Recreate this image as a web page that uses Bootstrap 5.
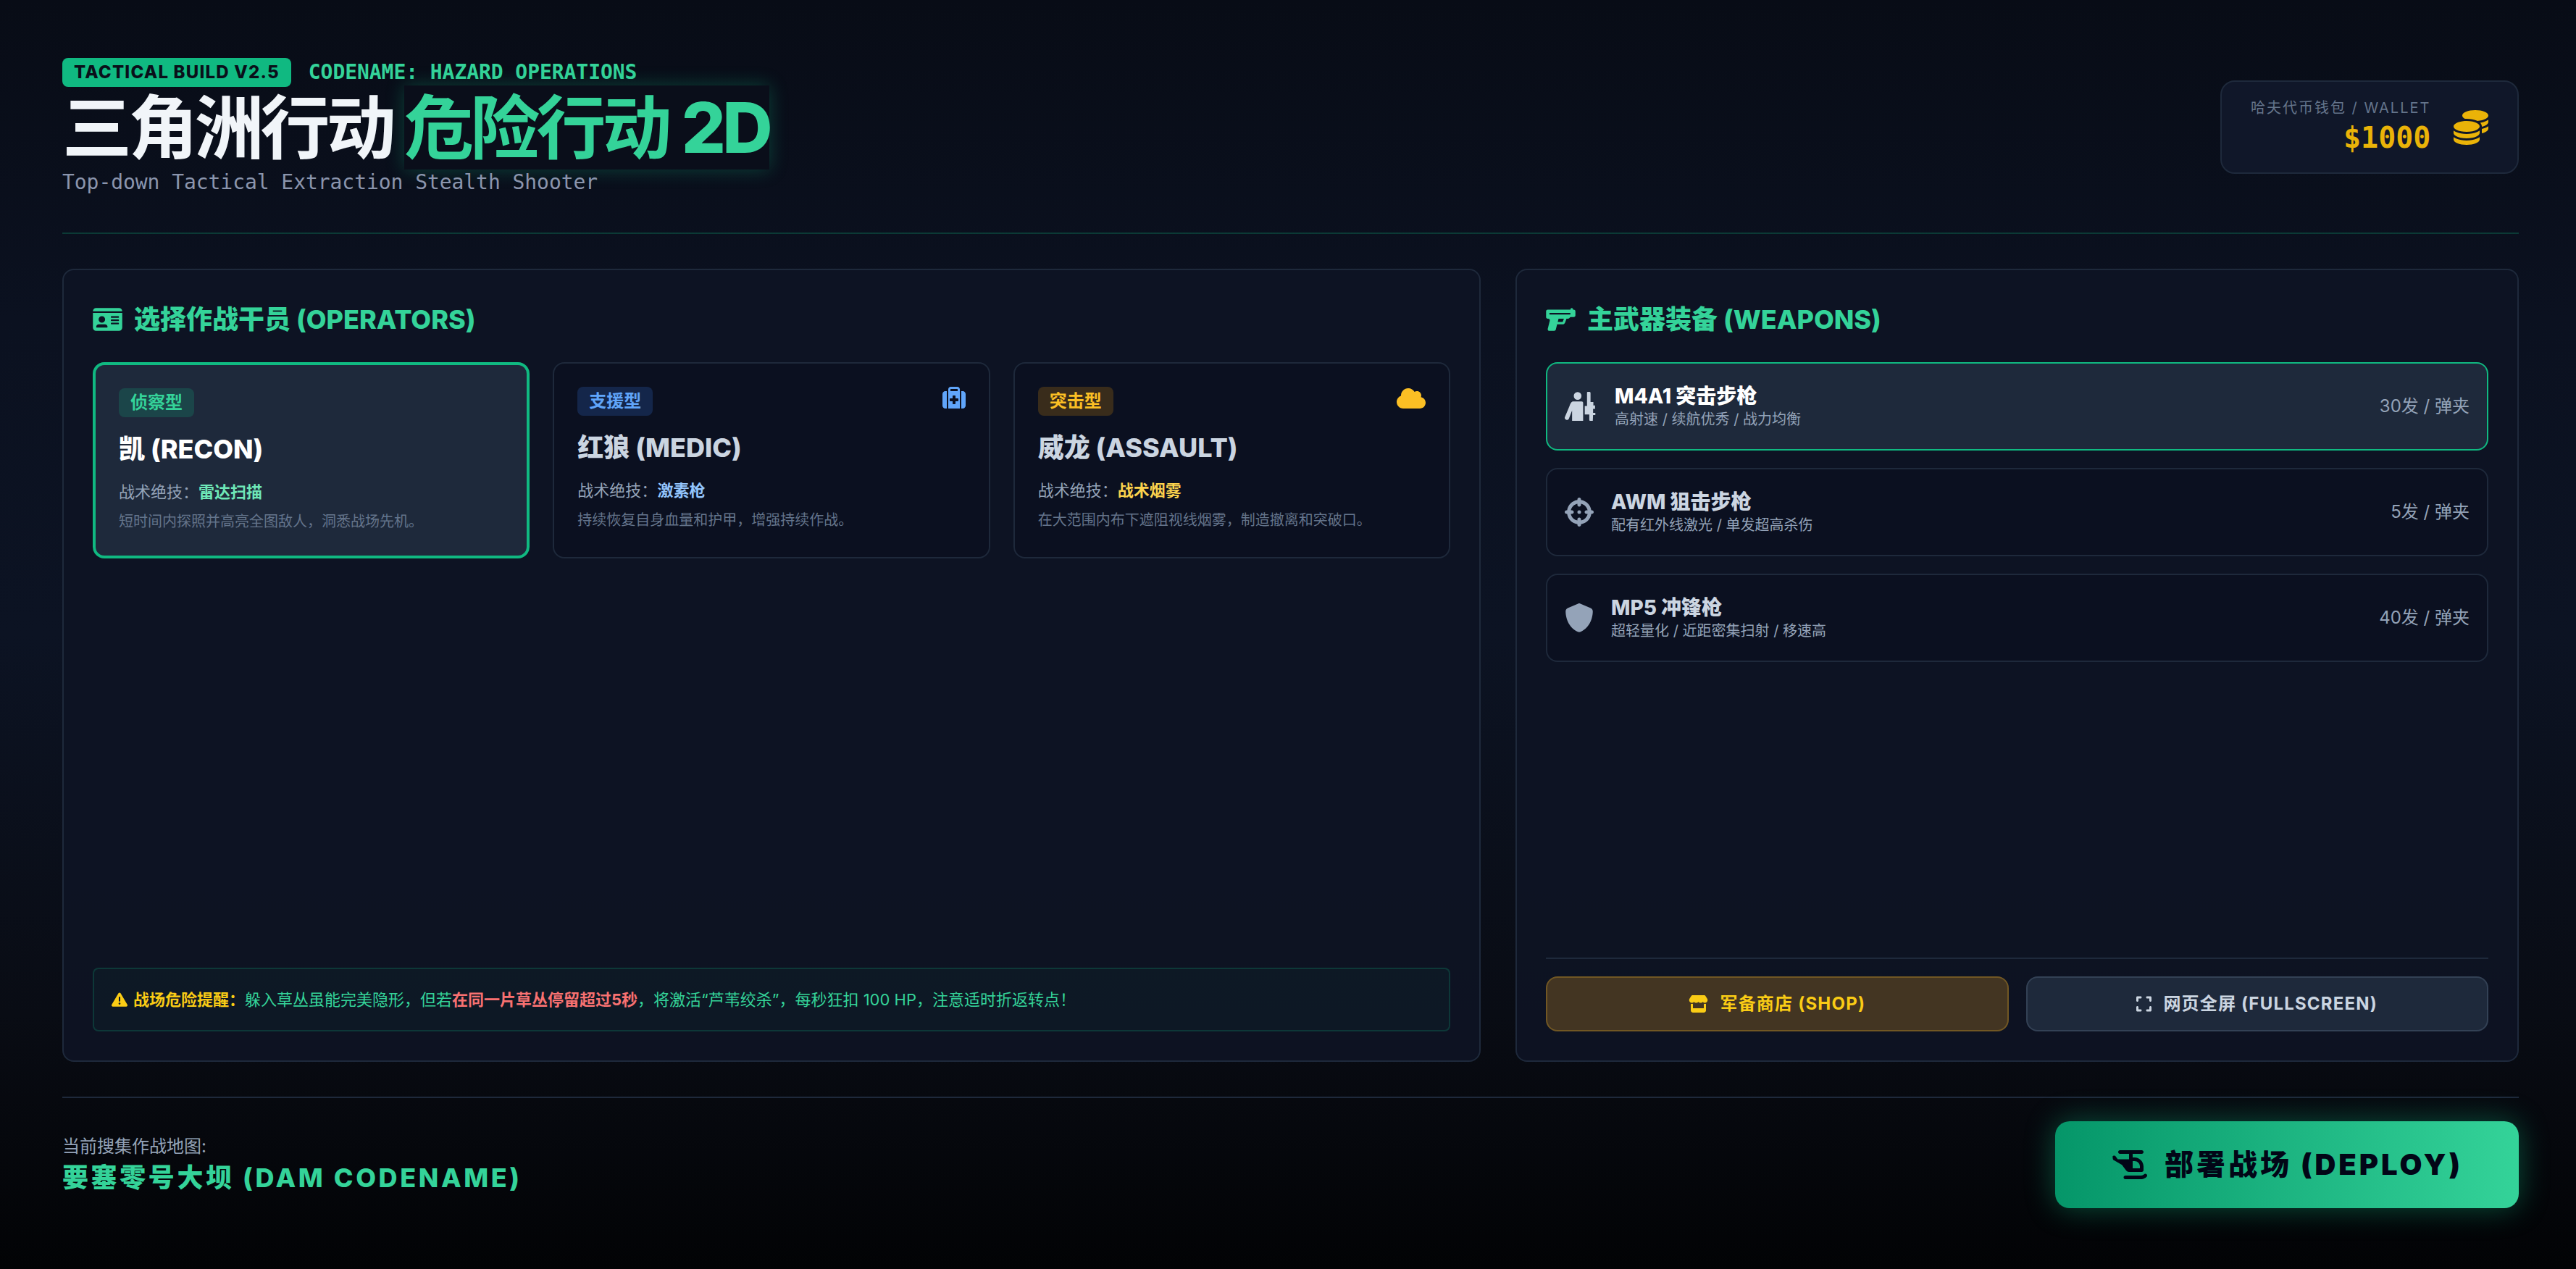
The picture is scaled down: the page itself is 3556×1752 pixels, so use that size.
<!DOCTYPE html>
<html lang="zh-CN">
<head>
<meta charset="utf-8">
<title>三角洲行动 危险行动 2D</title>
<link href="https://cdn.jsdelivr.net/npm/bootstrap@5.3.0/dist/css/bootstrap.min.css" rel="stylesheet">
<style>
:root{--inter:Inter,"Noto Sans CJK SC",sans-serif;--mono:"DejaVu Sans Mono","Noto Sans CJK SC",monospace;--em:#10b981;--em2:#34d399;--line:#1e293b}
html,body{height:100%}
body{font-family:var(--inter);background:linear-gradient(180deg,#080c16 0%,#0b1120 25%,#0c1323 50%,#090c14 80%,#020305 100%);color:#e2e8f0;overflow:hidden}
.shell{height:1752px;padding:80px 79px 84px 86px}
.build-tag{background:var(--em);color:#0a0f1a;font-size:24px;font-weight:800;letter-spacing:1.2px;height:40px;padding:0 16px;border-radius:8px;line-height:40px}
.codename{font-family:var(--mono);font-size:28px;font-weight:700;letter-spacing:-.06px;color:var(--em2);line-height:40px}
.hero{font-size:96px;font-weight:700;letter-spacing:-4.8px;line-height:96px;color:#f1f5f9;margin:8px 0 0}
.hero-accent{color:var(--em2);background:#0a0e1a;margin-left:16px;box-shadow:0 0 24px rgba(16,185,129,.3)}
.hero-latin{font-weight:800}
.tagline{font-family:var(--mono);font-size:28px;letter-spacing:-.06px;line-height:42px;color:#8b95ad;margin:7px 0 0}
.wallet{width:412px;height:129px;margin-bottom:2px;background:#101729;border:2px solid var(--line);border-radius:20px;padding:0 40px}
.wallet-label{font-size:20px;letter-spacing:2px;color:#64748b;line-height:24px;white-space:nowrap}
.wallet-amt{font-family:var(--mono);font-size:40px;font-weight:700;color:#eab308;line-height:48px;text-align:right;margin-top:5px}
.rule{height:2px;background:rgba(16,185,129,.25);margin:48px 0}
.rule-dim{height:2px;background:var(--line)}
.panel{background:rgba(14,19,36,.92);border:2px solid var(--line);border-radius:16px;padding:40px;height:100%}
.panel-title{font-size:36px;font-weight:800;line-height:44px;color:var(--em2);margin:6px 0 37px}
.op-grid{display:grid;grid-template-columns:repeat(3,1fr);gap:32px}
.op-card{position:relative;background:#0b1020;border:2px solid var(--line);border-radius:16px;padding:32px;height:271px}
.op-card.sel{background:var(--line);border:4px solid var(--em)}
.op-tag{display:inline-block;font-size:24px;font-weight:700;height:40px;line-height:40px;padding:0 16px;border-radius:8px}
.tag-g{background:rgba(16,185,129,.2);color:var(--em2)}
.tag-b{background:rgba(59,130,246,.2);color:#60a5fa}
.tag-y{background:rgba(245,158,11,.2);color:#fbbf24}
.op-name{font-size:36px;font-weight:800;line-height:44px;color:#cbd5e1;margin:22px 0 0}
.sel .op-name{color:#fff}
.op-skill{font-size:22px;line-height:30px;color:#94a3b8;margin:22px 0 0}
.op-skill b{font-weight:700}
.op-desc{font-size:20px;line-height:28px;color:#64748b;margin:12px 0 0}
.op-ico{position:absolute;top:32px;right:32px;height:32px}
.alert-box{height:88px;background:rgba(16,185,129,.04);border:2px solid rgba(16,185,129,.2);border-radius:8px;padding:0 24px;font-size:22px;color:#34d399}
.alert-box b{font-weight:700}
.weap{height:122px;background:#0b1020;border:2px solid var(--line);border-radius:16px;padding:0 24px}
.weap.sel{background:var(--line);border-color:var(--em)}
.weap-ico{height:40px;color:#94a3b8;flex:none}
.sel .weap-ico{color:#cbd5e1}
.weap-name{font-size:28px;font-weight:800;line-height:36px;color:#cbd5e1}
.sel .weap-name{color:#fff}
.weap-sub{font-size:20px;line-height:28px;color:#94a3b8}
.weap-ammo{font-size:24px;color:#94a3b8}
.act-btn{height:76px;flex:1 1 0;font-size:24px;font-weight:700;letter-spacing:1.2px;border-radius:16px;border-width:2px;border-style:solid}
.btn-shop{background:#433522;border-color:#715724;color:#facc15}
.btn-full{background:var(--line);border-color:#334155;color:#cbd5e1}
.map-label{font-size:24px;line-height:36px;color:#94a3b8}
.map-name{font-size:36px;font-weight:800;letter-spacing:3.6px;line-height:50px;color:var(--em2)}
.deploy{height:120px;width:640px;border:0;border-radius:20px;background:linear-gradient(90deg,#059669,#34d399);box-shadow:0 0 40px rgba(16,185,129,.4);color:#020617;font-size:40px;font-weight:900;letter-spacing:4px}
svg{fill:currentColor;display:block}
</style>
</head>
<body>
<div class="shell d-flex flex-column">
  <header class="d-flex justify-content-between align-items-center">
    <div>
      <div class="d-flex align-items-center gap-4">
        <span class="build-tag">TACTICAL BUILD V2.5</span>
        <span class="codename">CODENAME: HAZARD OPERATIONS</span>
      </div>
      <h1 class="hero">三角洲行动<span class="hero-accent">危险行动 <span class="hero-latin">2D</span></span></h1>
      <p class="tagline">Top-down Tactical Extraction Stealth Shooter</p>
    </div>
    <div class="wallet d-flex align-items-center justify-content-between">
      <div>
        <div class="wallet-label">哈夫代币钱包 / WALLET</div>
        <div class="wallet-amt">$1000</div>
      </div>
      <svg viewBox="0 0 512 512" width="48" height="48" style="color:#eab308"><path d="M512 80c0 18-14.3 34.6-38.4 48c-29.1 16.1-72.5 27.5-122.3 30.9c-3.7-1.8-7.4-3.5-11.3-5C300.6 137.4 248.2 128 192 128c-8.3 0-16.4 .2-24.5 .6l-1.1-.6C142.3 114.6 128 98 128 80c0-44.2 86-80 192-80S512 35.8 512 80zM160.7 161.1c10.2-.7 20.7-1.1 31.3-1.1c62.2 0 117.4 12.3 152.5 31.4C369.3 204.9 384 221.7 384 240c0 4-.7 7.9-2.1 11.7c-4.6 13.2-17 25.3-35 35.5c0 0 0 0 0 0c-.1 .1-.3 .1-.4 .2l0 0 0 0c-.3 .2-.6 .3-.9 .5c-35 19.4-90.8 32-153.6 32c-59.6 0-112.9-11.3-148.2-29.1c-1.9-.9-3.7-1.9-5.5-2.9C14.3 274.6 0 258 0 240c0-34.8 53.4-64.5 128-75.4c10.5-1.5 21.4-2.7 32.7-3.5zM416 240c0-21.9-10.6-39.9-24.1-53.4c28.3-4.4 54.2-11.4 76.2-20.5c16.3-6.8 31.5-15.2 43.9-25.5V176c0 19.3-16.5 37.1-43.8 50.9c-14.6 7.4-32.4 13.7-52.4 18.5c.1-1.8 .2-3.5 .2-5.3zm-32 96c0 18-14.3 34.6-38.4 48c-1.8 1-3.6 1.9-5.5 2.9C304.9 404.7 251.6 416 192 416c-62.8 0-118.6-12.6-153.6-32C14.3 370.6 0 354 0 336V300.6c12.5 10.3 27.6 18.7 43.9 25.5C83.4 342.6 135.8 352 192 352s108.6-9.4 148.1-25.9c7.8-3.2 15.3-6.9 22.4-10.9c6.1-3.4 11.8-7.2 17.2-11.2c1.5-1.1 2.9-2.3 4.3-3.4V304v5.7V336zm32 0V304 278.1c19-4.2 36.5-9.5 52.1-16c16.3-6.8 31.5-15.2 43.9-25.5V272c0 10.5-5 21-14.9 30.9c-16.3 16.3-45 29.7-81.3 38.4c.1-1.7 .2-3.5 .2-5.3zM192 448c56.2 0 108.6-9.4 148.1-25.9c16.3-6.8 31.5-15.2 43.9-25.5V432c0 44.2-86 80-192 80S0 476.2 0 432V396.6c12.5 10.3 27.6 18.7 43.9 25.5C83.4 438.6 135.8 448 192 448z"/></svg>
    </div>
  </header>
  <div class="rule"></div>
  <main class="row gx-5 flex-grow-1" style="min-height:0">
    <div class="col-7 h-100">
      <section class="panel d-flex flex-column">
        <h2 class="panel-title d-flex align-items-center gap-3">
          <svg viewBox="0 0 576 512" width="41" height="36"><path d="M0 96l576 0c0-35.3-28.7-64-64-64H64C28.7 32 0 60.7 0 96zm0 32V416c0 35.3 28.7 64 64 64H512c35.3 0 64-28.7 64-64V128H0zM64 405.3c0-29.5 23.9-53.3 53.3-53.3H234.7c29.5 0 53.3 23.9 53.3 53.3c0 5.9-4.8 10.7-10.7 10.7H74.7c-5.9 0-10.7-4.8-10.7-10.7zM176 192a64 64 0 1 1 0 128 64 64 0 1 1 0-128zm176 16c0-8.8 7.2-16 16-16H496c8.8 0 16 7.2 16 16s-7.2 16-16 16H368c-8.8 0-16-7.2-16-16zm0 64c0-8.8 7.2-16 16-16H496c8.8 0 16 7.2 16 16s-7.2 16-16 16H368c-8.8 0-16-7.2-16-16zm0 64c0-8.8 7.2-16 16-16H496c8.8 0 16 7.2 16 16s-7.2 16-16 16H368c-8.8 0-16-7.2-16-16z"/></svg>
          选择作战干员 (OPERATORS)
        </h2>
        <div class="op-grid">
          <article class="op-card sel">
            <span class="op-tag tag-g">侦察型</span>
            <div class="op-name">凯 (RECON)</div>
            <div class="op-skill">战术绝技&#xFF1A;<b style="color:#6ee7b7">雷达扫描</b></div>
            <div class="op-desc">短时间内探照并高亮全图敌人&#xFF0C;洞悉战场先机。</div>
          </article>
          <article class="op-card">
            <span class="op-tag tag-b">支援型</span>
            <svg class="op-ico" viewBox="0 0 512 512" width="32" height="32" style="color:#60a5fa"><path d="M184 48H328c4.4 0 8 3.6 8 8V96H176V56c0-4.4 3.6-8 8-8zm-56 8V96v32V480H384V128 96 56c0-30.9-25.1-56-56-56H184c-30.9 0-56 25.1-56 56zM96 96H64C28.7 96 0 124.7 0 160V416c0 35.3 28.7 64 64 64H96V96zM416 480h32c35.3 0 64-28.7 64-64V160c0-35.3-28.7-64-64-64H416V480zM224 208c0-8.8 7.2-16 16-16h32c8.8 0 16 7.2 16 16v48h48c8.8 0 16 7.2 16 16v32c0 8.8-7.2 16-16 16H288v48c0 8.8-7.2 16-16 16H240c-8.8 0-16-7.2-16-16V320H176c-8.8 0-16-7.2-16-16V272c0-8.8 7.2-16 16-16h48V208z"/></svg>
            <div class="op-name">红狼 (MEDIC)</div>
            <div class="op-skill">战术绝技&#xFF1A;<b style="color:#93c5fd">激素枪</b></div>
            <div class="op-desc">持续恢复自身血量和护甲&#xFF0C;增强持续作战。</div>
          </article>
          <article class="op-card">
            <span class="op-tag tag-y">突击型</span>
            <svg class="op-ico" viewBox="0 0 640 512" width="40" height="32" style="color:#fbbf24"><path d="M0 336c0 79.5 64.5 144 144 144H512c70.7 0 128-57.3 128-128c0-61.9-44-113.6-102.4-125.4c4.1-10.7 6.4-22.4 6.4-34.6c0-53-43-96-96-96c-19.7 0-38.1 6-53.3 16.2C367 64.2 315.3 32 256 32C167.6 32 96 103.6 96 192c0 2.7 .1 5.4 .2 8.1C40.2 219.8 0 273.2 0 336z"/></svg>
            <div class="op-name">威龙 (ASSAULT)</div>
            <div class="op-skill">战术绝技&#xFF1A;<b style="color:#fcd34d">战术烟雾</b></div>
            <div class="op-desc">在大范围内布下遮阻视线烟雾&#xFF0C;制造撤离和突破口。</div>
          </article>
        </div>
        <div class="alert-box mt-auto d-flex align-items-center gap-2">
          <svg viewBox="0 0 512 512" width="22" height="22" style="color:#facc15"><path d="M256 32c14.2 0 27.3 7.5 34.5 19.8l216 368c7.3 12.4 7.3 27.7 .2 40.1S486.3 480 472 480H40c-14.3 0-27.6-7.7-34.7-20.1s-7-27.8 .2-40.1l216-368C228.7 39.5 241.8 32 256 32zm0 128c-13.3 0-24 10.7-24 24V296c0 13.3 10.7 24 24 24s24-10.7 24-24V184c0-13.3-10.7-24-24-24zm32 224a32 32 0 1 0 -64 0 32 32 0 1 0 64 0z"/></svg>
          <span><b style="color:#facc15">战场危险提醒&#xFF1A;</b>躲入草丛虽能完美隐形&#xFF0C;但若<b style="color:#f87171">在同一片草丛停留超过5秒</b>&#xFF0C;将激活“芦苇绞杀”&#xFF0C;每秒狂扣 100 HP&#xFF0C;注意适时折返转点&#xFF01;</span>
        </div>
      </section>
    </div>
    <div class="col-5 h-100">
      <section class="panel d-flex flex-column">
        <h2 class="panel-title d-flex align-items-center gap-3">
          <svg viewBox="0 0 576 512" width="41" height="36"><path d="M528 56c0-13.3-10.7-24-24-24s-24 10.7-24 24v8H32C14.3 64 0 78.3 0 96V208c0 17.7 14.3 32 32 32H42c20.8 0 36.1 19.6 31 39.8L33 440.2c-2.4 9.6-.2 19.7 5.8 27.5S54.1 480 64 480h96c14.7 0 27.5-10 31-24.2L217 352H321.4c23.7 0 44.8-14.9 52.7-37.2L400.9 240H432c8.5 0 16.6-3.4 22.6-9.4L477.3 208H544c17.7 0 32-14.3 32-32V96c0-17.7-14.3-32-32-32H528V56zM321.4 304H229l16-64h105l-21 58.7c-1.1 3.2-4.2 5.3-7.5 5.3zM80 128H464c8.8 0 16 7.2 16 16s-7.2 16-16 16H80c-8.8 0-16-7.2-16-16s7.2-16 16-16z"/></svg>
          主武器装备 (WEAPONS)
        </h2>
        <div class="d-flex flex-column gap-4">
          <div class="weap sel d-flex align-items-center justify-content-between">
            <div class="d-flex align-items-center gap-4">
              <svg class="weap-ico" viewBox="0 0 576 512" width="45" height="40"><circle cx="228" cy="72" r="68"/><path d="M150 170H300c15 0 25 10 25 25V512H130V330L75 470c-8 22-30 32-50 24s-30-30-22-50L85 250c15-45 35-80 65-80z"/><path d="M394 10c0-6 6-10 12-10h30c10 0 20 8 20 18V180h50v60h30v60h-35v70h40v40h-40l-5 102h-40c-14 0-22-8-22-20V400H354V250h40z"/></svg>
              <div><div class="weap-name">M4A1 突击步枪</div><div class="weap-sub">高射速 / 续航优秀 / 战力均衡</div></div>
            </div>
            <span class="weap-ammo">30发 / 弹夹</span>
          </div>
          <div class="weap d-flex align-items-center justify-content-between">
            <div class="d-flex align-items-center gap-4">
              <svg class="weap-ico" viewBox="0 0 512 512" width="40" height="40"><path d="M256 0c17.7 0 32 14.3 32 32V42.4c93.7 13.9 167.7 88 181.6 181.6H480c17.7 0 32 14.3 32 32s-14.3 32-32 32H469.6c-13.9 93.7-88 167.7-181.6 181.6V480c0 17.7-14.3 32-32 32s-32-14.3-32-32V469.6C130.3 455.7 56.3 381.7 42.4 288H32c-17.7 0-32-14.3-32-32s14.3-32 32-32H42.4C56.3 130.3 130.3 56.3 224 42.4V32c0-17.7 14.3-32 32-32zM107.4 288c12.5 58.3 58.4 104.1 116.6 116.6V384c0-17.7 14.3-32 32-32s32 14.3 32 32v20.6c58.3-12.5 104.1-58.4 116.6-116.6H384c-17.7 0-32-14.3-32-32s14.3-32 32-32h20.6C392.1 165.7 346.3 119.9 288 107.4V128c0 17.7-14.3 32-32 32s-32-14.3-32-32V107.4C165.7 119.9 119.9 165.7 107.4 224H128c17.7 0 32 14.3 32 32s-14.3 32-32 32H107.4zM256 224a32 32 0 1 1 0 64 32 32 0 1 1 0-64z"/></svg>
              <div><div class="weap-name">AWM 狙击步枪</div><div class="weap-sub">配有红外线激光 / 单发超高杀伤</div></div>
            </div>
            <span class="weap-ammo">5发 / 弹夹</span>
          </div>
          <div class="weap d-flex align-items-center justify-content-between">
            <div class="d-flex align-items-center gap-4">
              <svg class="weap-ico" viewBox="0 0 512 512" width="40" height="40"><path d="M256 0c4.6 0 9.2 1 13.4 2.9L457.7 82.8c22 9.3 38.4 31 38.3 57.2c-.5 99.2-41.3 280.7-213.6 363.2c-16.7 8-36.1 8-52.8 0C57.3 420.7 16.5 239.2 16 140c-.1-26.2 16.3-47.9 38.3-57.2L242.7 2.9C246.8 1 251.4 0 256 0z"/></svg>
              <div><div class="weap-name">MP5 冲锋枪</div><div class="weap-sub">超轻量化 / 近距密集扫射 / 移速高</div></div>
            </div>
            <span class="weap-ammo">40发 / 弹夹</span>
          </div>
        </div>
        <div class="rule-dim mt-auto"></div>
        <div class="d-flex gap-4 mt-4">
          <button class="act-btn btn-shop d-flex align-items-center justify-content-center gap-3" type="button">
            <svg viewBox="0 0 576 512" width="27" height="24"><path d="M547.6 103.8L490.3 13.1C485.2 5 476.1 0 466.4 0H109.6C99.9 0 90.8 5 85.7 13.1L28.3 103.8c-29.6 46.8-3.4 111.9 51.9 119.4c4 .5 8.1 .8 12.1 .8c26.1 0 49.3-11.4 65.2-29c15.9 17.6 39.1 29 65.2 29c26.1 0 49.3-11.4 65.2-29c15.9 17.6 39.1 29 65.2 29c26.2 0 49.3-11.4 65.2-29c16 17.6 39.1 29 65.2 29c4.1 0 8.1-.3 12.1-.8c55.5-7.4 81.8-72.5 52.1-119.4zM499.7 254.9l-.1 0c-5.3 .7-10.7 1.1-16.2 1.1c-12.4 0-24.3-1.9-35.4-5.3V384H128V250.6c-11.2 3.5-23.2 5.4-35.6 5.4c-5.5 0-11-.4-16.3-1.1l-.1 0c-4.1-.6-8.1-1.3-12-2.3V384v64c0 35.3 28.7 64 64 64H448c35.3 0 64-28.7 64-64V384 252.6c-4 1-8 1.8-12.3 2.3z"/></svg>
            军备商店 (SHOP)
          </button>
          <button class="act-btn btn-full d-flex align-items-center justify-content-center gap-3" type="button">
            <svg viewBox="0 0 448 512" width="21" height="24"><path d="M32 32C14.3 32 0 46.3 0 64v96c0 17.7 14.3 32 32 32s32-14.3 32-32V96h64c17.7 0 32-14.3 32-32s-14.3-32-32-32H32zM64 352c0-17.7-14.3-32-32-32s-32 14.3-32 32v96c0 17.7 14.3 32 32 32h96c17.7 0 32-14.3 32-32s-14.3-32-32-32H64V352zM320 32c-17.7 0-32 14.3-32 32s14.3 32 32 32h64v64c0 17.7 14.3 32 32 32s32-14.3 32-32V64c0-17.7-14.3-32-32-32H320zM448 352c0-17.7-14.3-32-32-32s-32 14.3-32 32v64H320c-17.7 0-32 14.3-32 32s14.3 32 32 32h96c17.7 0 32-14.3 32-32V352z"/></svg>
            网页全屏 (FULLSCREEN)
          </button>
        </div>
      </section>
    </div>
  </main>
  <div class="rule-dim mt-5"></div>
  <footer class="d-flex justify-content-between align-items-center pt-4 mt-2">
    <div>
      <div class="map-label">当前搜集作战地图:</div>
      <div class="map-name">要塞零号大坝 (DAM CODENAME)</div>
    </div>
    <button class="deploy d-flex align-items-center justify-content-center gap-4" type="button">
      <svg viewBox="0 0 640 512" width="50" height="40"><path d="M128 32c0-17.7 14.3-32 32-32H544c17.7 0 32 14.3 32 32s-14.3 32-32 32H384v64h32c88.4 0 160 71.6 160 160v64c0 17.7-14.3 32-32 32H384 320c-20.1 0-39.1-9.5-51.2-25.6l-71.4-95.2c-3.5-4.7-8.3-8.2-13.7-10.1L57.1 179.8C44.1 175.5 34.9 164 33.4 150.4L29.8 118.2C28.4 109.5 35.1 96 49.7 96H64c6.5 0 12.6 2.9 16.7 8L120 160H320V64H160c-17.7 0-32-14.3-32-32zM384 320H512V288c0-53-43-96-96-96H384V320zM630.6 425.4c12.5 12.5 12.5 32.8 0 45.3l-3.9 3.9c-24 24-56.6 37.5-90.5 37.5H256c-17.7 0-32-14.3-32-32s14.3-32 32-32H536.2c17 0 33.3-6.7 45.3-18.7l3.9-3.9c12.5-12.5 32.8-12.5 45.3 0z"/></svg>
      部署战场 (DEPLOY)
    </button>
  </footer>
</div>
<script src="https://cdn.jsdelivr.net/npm/bootstrap@5.3.0/dist/js/bootstrap.bundle.min.js"></script>
</body>
</html>
